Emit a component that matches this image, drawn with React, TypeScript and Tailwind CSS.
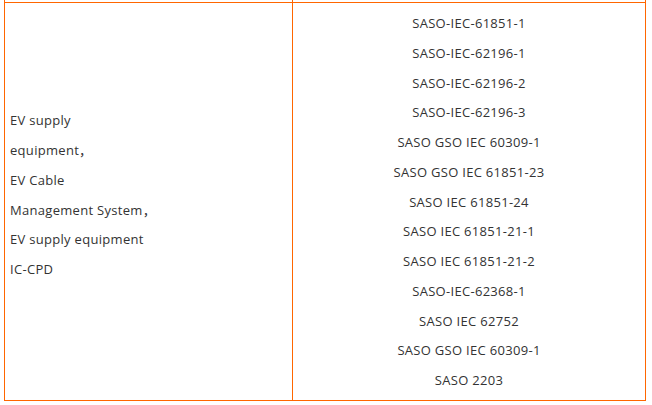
const LEFT = [
  "EV supply",
  "equipment，",
  "EV Cable",
  "Management System，",
  "EV supply equipment",
  "IC-CPD",
];

const RIGHT = [
  "SASO-IEC-61851-1",
  "SASO-IEC-62196-1",
  "SASO-IEC-62196-2",
  "SASO-IEC-62196-3",
  "SASO GSO IEC 60309-1",
  "SASO GSO IEC 61851-23",
  "SASO IEC 61851-24",
  "SASO IEC 61851-21-1",
  "SASO IEC 61851-21-2",
  "SASO-IEC-62368-1",
  "SASO IEC 62752",
  "SASO GSO IEC 60309-1",
  "SASO 2203",
];

export default function App() {
  return (
    <div className="h-[405px] w-[652px] bg-white font-['Open_Sans','Noto_Sans_CJK_SC',sans-serif] text-[13px] tracking-[0.3px] text-[#333]">
      <div className="ml-1 w-[642px] border-x border-b border-[#ff6600]">
        {/* tail of the previous row */}
        <div className="flex h-[2px]">
          <div className="w-[288px] border-r border-[#ff6600]" />
        </div>
        <div className="flex h-[398px] border-t border-[#ff6600]">
          <div className="flex w-[288px] flex-col justify-center border-r border-[#ff6600] pb-3 pl-[5px]">
            {LEFT.map((t) => (
              <p key={t} className="leading-[29.75px]">
                {t}
              </p>
            ))}
          </div>
          <div className="flex flex-1 flex-col justify-center pt-[2px] text-center">
            {RIGHT.map((t, i) => (
              <p key={i} className="leading-[29.75px]">
                {t}
              </p>
            ))}
          </div>
        </div>
      </div>
    </div>
  );
}
